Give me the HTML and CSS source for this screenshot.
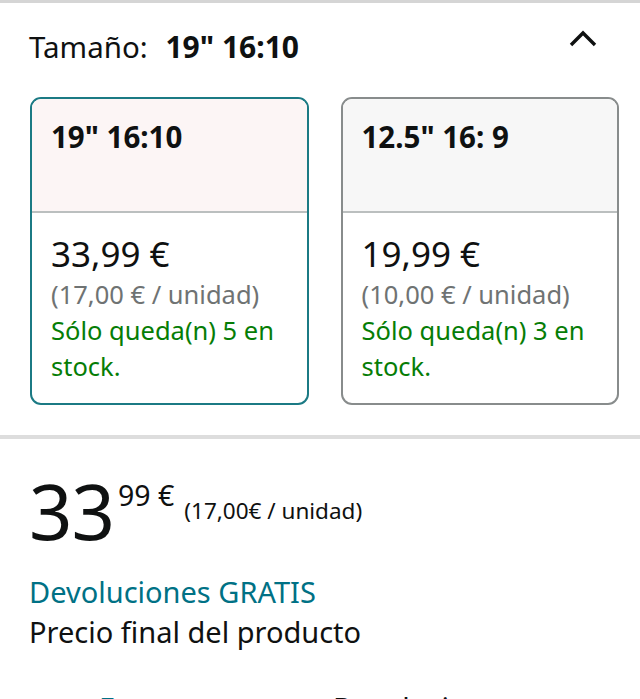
FILE: index.html
```html
<!DOCTYPE html>
<html lang="es">
<head>
  <meta charset="UTF-8" />
  <meta name="viewport" content="width=device-width, initial-scale=1.0"/>
  <title>Tamaño</title>
  <link rel="stylesheet" href="styles.css">
</head>
<body>
  <div class="top-bar"></div>

  <div class="variations">
    <div class="variation-header">
      <div class="variation-label">Tamaño: <b>19" 16:10</b></div>
      <svg class="chevron" width="30" height="18" viewBox="0 0 30 18">
        <polyline points="2,15 14,3 26,15" fill="none" stroke="#0f1111" stroke-width="3.4" />
      </svg>
    </div>

    <div class="swatches">
      <!-- selected option -->
      <div class="swatch selected">
        <div class="swatch-title">19" 16:10</div>
        <div class="swatch-body">
          <div class="swatch-price">33,99 €</div>
          <div class="swatch-unit">(17,00 € / unidad)</div>
          <div class="swatch-stock">Sólo queda(n) 5 en stock.</div>
        </div>
      </div>

      <div class="swatch">
        <div class="swatch-title">12.5" 16: 9</div>
        <div class="swatch-body">
          <div class="swatch-price">19,99 €</div>
          <div class="swatch-unit">(10,00 € / unidad)</div>
          <div class="swatch-stock">Sólo queda(n) 3 en stock.</div>
        </div>
      </div>
    </div>
  </div>

  <div class="divider"></div>

  <div class="buybox">
    <div class="price-row">
      <span class="price-whole">33</span>
      <span class="price-fraction">99 €</span>
      <span class="price-unit">(17,00€ / unidad)</span>
    </div>
    <div class="returns">Devoluciones GRATIS</div>
    <div class="final-price">Precio final del producto</div>

    <div class="info-row">
      <span class="info-link">Entrega</span>
      <span class="info-text">Devoluciones</span>
    </div>
  </div>
</body>
</html>
```

FILE: styles.css
```css
body {
  margin: 0;
  background-color: #ffffff;
  color: #0f1111;
  font-family: "Noto Sans", Arial, sans-serif;
  overflow: hidden;
}
.top-bar {
  height: 3px;
  background-color: #d5d5d5;
}
.variations {
  padding: 0 21px 0 30px;
}
.variation-header {
  display: flex;
  justify-content: space-between;
  align-items: center;
  height: 94px;
}
.variation-label {
  font-size: 29.5px;
  margin-top: -8px;
  margin-left: -1px;
}
.variation-label b {
  font-size: 30px;
  margin-left: 10px;
}
.chevron {
  margin-right: 20px;
  margin-top: -22px;
}
.swatches {
  display: grid;
  grid-template-columns: 1fr 1fr;
  gap: 32px;
}
.swatch {
  border: 2px solid #888c8c;
  border-radius: 11px;
  overflow: hidden;
}
.swatch.selected {
  border-color: #1b7a84;
}
.swatch-title {
  height: 114px;
  box-sizing: border-box;
  padding: 17px 19px 0;
  font-size: 29.5px;
  font-weight: bold;
  background-color: #f7f7f7;
  border-bottom: 2px solid #bbbfbf;
}
.swatch.selected .swatch-title {
  background-color: #fcf5f5;
}
.swatch-body {
  padding: 19px 19px 14px;
  height: 190px;
  box-sizing: border-box;
}
.swatch-price {
  font-size: 35px;
  line-height: 44px;
}
.swatch-unit {
  font-size: 25.5px;
  line-height: 36px;
  color: #6f7373;
}
.swatch-stock {
  font-size: 25.5px;
  line-height: 36px;
  color: #067d06;
}
.divider {
  height: 4px;
  margin-top: 30px;
  background-color: #dddddd;
}
.buybox {
  padding: 0 29px;
}
.price-row {
  display: flex;
  align-items: flex-start;
  margin-top: 27px;
  height: 90px;
}
.price-whole {
  font-size: 76px;
  line-height: 90px;
  letter-spacing: -1px;
}
.price-fraction {
  font-size: 28.5px;
  line-height: 36px;
  margin-left: 4px;
  margin-top: 11px;
}
.price-unit {
  font-size: 22.5px;
  line-height: 30px;
  margin-left: 10px;
  margin-top: 30px;
}
.returns {
  margin-top: 16px;
  font-size: 29px;
  line-height: 40px;
  color: #007185;
}
.final-price {
  font-size: 29px;
  line-height: 40px;
}
.info-row {
  display: flex;
  margin-top: 36px;
  font-size: 29px;
  line-height: 40px;
}
.info-link {
  color: #007185;
  margin-left: 70px;
  width: 234px;
}
```
